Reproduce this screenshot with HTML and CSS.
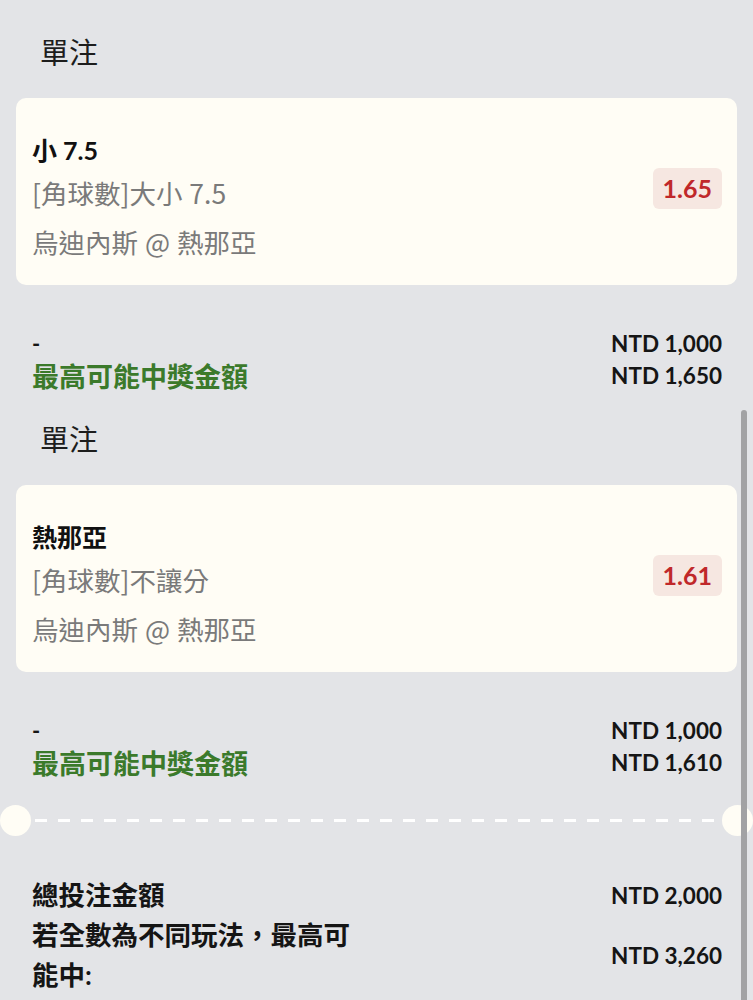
FILE: index.html
```html
<!DOCTYPE html>
<html lang="zh-Hant">
<head>
    <meta charset="UTF-8">
    <meta name="viewport" content="width=device-width,initial-scale=1.0">
    <title>投注單</title>
    <link rel="stylesheet" href="styles.css">
</head>
<body>
    <div class="slip">
        <section class="bet">
            <h2 class="bet-type">單注</h2>
            <div class="bet-card">
                <div class="bet-info">
                    <div class="bet-pick">小 7.5</div>
                    <div class="bet-market">[角球數]大小 7.5</div>
                    <div class="bet-match">烏迪內斯 @ 熱那亞</div>
                </div>
                <span class="odds">1.65</span>
            </div>
            <div class="bet-amounts">
                <div class="amount-row"><span class="stake-label">-</span><span class="amount">NTD 1,000</span></div>
                <div class="amount-row"><span class="win-label">最高可能中獎金額</span><span class="amount">NTD 1,650</span></div>
            </div>
        </section>

        <section class="bet">
            <h2 class="bet-type">單注</h2>
            <div class="bet-card">
                <div class="bet-info">
                    <div class="bet-pick">熱那亞</div>
                    <div class="bet-market">[角球數]不讓分</div>
                    <div class="bet-match">烏迪內斯 @ 熱那亞</div>
                </div>
                <span class="odds">1.61</span>
            </div>
            <div class="bet-amounts">
                <div class="amount-row"><span class="stake-label">-</span><span class="amount">NTD 1,000</span></div>
                <div class="amount-row"><span class="win-label">最高可能中獎金額</span><span class="amount">NTD 1,610</span></div>
            </div>
        </section>
    </div>

    <div class="ticket-cut">
        <span class="notch"></span>
        <span class="dashes"></span>
        <span class="notch"></span>
    </div>

    <div class="summary">
        <div class="summary-row">
            <span class="summary-label">總投注金額</span>
            <span class="amount">NTD 2,000</span>
        </div>
        <div class="summary-row">
            <span class="summary-label">若全數為不同玩法，最高可能中:</span>
            <span class="amount">NTD 3,260</span>
        </div>
    </div>

    <div class="scroll-thumb"></div>
</body>
</html>
```

FILE: styles.css
```css
html,body{margin: 0;padding: 0;}
body{
    position: relative;
    min-height: 1000px;
    background: #e3e4e7;
    color: #151515;
    font-family: Lato, "Noto Sans CJK TC", sans-serif;
    overflow: hidden;
}

.slip{padding: 33px 16px 0;}
.bet + .bet{margin-top: 29px;}

.bet-type{
    margin: 0 0 25px 24px;
    font-size: 29px;
    font-weight: 400;
    line-height: 40px;
    color: #1d1d1d;
}

.bet-card{
    display: flex;
    align-items: center;
    justify-content: space-between;
    height: 187px;
    box-sizing: border-box;
    padding: 32px 15px 19px 16px;
    background: #fffdf5;
    border-radius: 10px;
}
.bet-info{align-self: flex-start;}
.bet-pick{font-size: 25px;font-weight: 700;line-height: 40px;color: #111;}
.bet-market,.bet-match{font-family: "Noto Sans CJK TC", sans-serif;font-size: 26.5px;word-spacing: 1px;color: #7a7a7a;}
.bet-market{line-height: 46px;}
.bet-match{line-height: 52px;}

.odds{
    margin-top: -19px;
    padding: 0 10px;
    height: 41px;
    line-height: 41px;
    border-radius: 6px;
    background: #f6e7e1;
    color: #c0282a;
    font-size: 25px;
    font-weight: 700;
}

.bet-amounts{margin-top: 42px;padding: 0 15px 0 16px;}
.amount-row{display: flex;justify-content: space-between;align-items: center;height: 32px;}
.stake-label{font-size: 22px;font-weight: 700;}
.win-label{font-size: 27px;font-weight: 700;color: #3b7a2b;}
.amount{font-size: 22.5px;font-weight: 700;color: #151515;}

.ticket-cut{
    display: flex;
    align-items: center;
    margin-top: 26px;
    height: 32px;
}
.notch{
    flex: none;
    width: 31px;
    height: 31px;
    border-radius: 50%;
    background: #fffdf5;
}
.dashes{
    flex: 1;
    height: 3px;
    margin: 0 4px;
    background: repeating-linear-gradient(90deg,#fff 0 12px,transparent 12px 23px);
}

.summary{margin-top: 39px;padding: 0 31px 0 32px;}
.summary-row{display: flex;justify-content: space-between;align-items: center;}
.summary-label{width: 330px;font-size: 26.5px;font-weight: 700;line-height: 40px;}

.scroll-thumb{
    position: absolute;
    top: 410px;
    right: 6px;
    bottom: 0;
    width: 6px;
    border-radius: 3px 3px 0 0;
    background: #a2a2a4;
}
```
